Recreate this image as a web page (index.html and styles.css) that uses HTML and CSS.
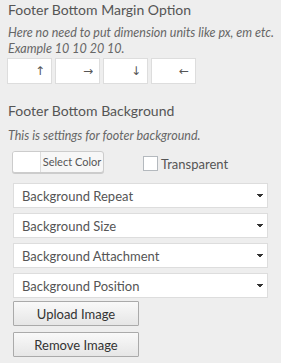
FILE: index.html
```html
<!DOCTYPE html>
<html lang="en">
<head>
    <meta charset="UTF-8">
    <title>Footer Bottom Options</title>
    <link rel="stylesheet" href="styles.css">
</head>
<body>
    <div class="options-panel">
        <div class="option-block">
            <h4 class="option-title">Footer Bottom Margin Option</h4>
            <p class="option-desc">Here no need to put dimension units like px, em etc. Example 10 10 20 10.</p>
            <div class="dimension-row">
                <input type="text" class="dimension-input" placeholder="&#8593;">
                <input type="text" class="dimension-input" placeholder="&#8594;">
                <input type="text" class="dimension-input" placeholder="&#8595;">
                <input type="text" class="dimension-input" placeholder="&#8592;">
            </div>
        </div>

        <div class="option-block">
            <h4 class="option-title">Footer Bottom Background</h4>
            <p class="option-desc">This is settings for footer background.</p>
            <div class="color-row">
                <button type="button" class="color-picker">
                    <span class="color-swatch"></span>
                    <span class="color-label">Select Color</span>
                </button>
                <label class="transparent-check">
                    <input type="checkbox">
                    <span>Transparent</span>
                </label>
            </div>

            <div class="select-list">
                <select class="bg-select"><option>Background Repeat</option></select>
                <select class="bg-select"><option>Background Size</option></select>
                <select class="bg-select"><option>Background Attachment</option></select>
                <select class="bg-select"><option>Background Position</option></select>
            </div>

            <div class="image-buttons">
                <button type="button" class="image-button">Upload Image</button>
                <button type="button" class="image-button">Remove Image</button>
            </div>
        </div>
    </div>
</body>
</html>
```

FILE: styles.css
```css
body {
    font-family: Lato, "Open Sans", Arial, sans-serif;
    background-color: #eeeeee;
    margin: 0;
    padding: 0;
    color: #555;
}
.options-panel {
    padding: 1px 0 0 0;
    width: 281px;
}
.option-block {
    padding: 0 0 0 7px;
}
.option-title {
    margin: 0 0 0 1px;
    font-size: 14px;
    font-weight: normal;
    line-height: 18px;
    color: #555;
}
.option-desc {
    margin: 6px 0 1px 1px;
    font-size: 12.5px;
    font-style: italic;
    line-height: 16px;
    color: #666;
}
.dimension-row {
    display: flex;
    gap: 3px;
}
.dimension-input {
    width: 45px;
    height: 26px;
    margin: 0;
    box-sizing: border-box;
    border: 1px solid #ddd;
    background-color: #fff;
    padding: 0 6px;
    text-align: right;
    font-size: 12px;
    font-family: "DejaVu Sans", sans-serif;
}
.dimension-input::placeholder {
    color: #555;
}
.option-block + .option-block {
    margin-top: 18px;
}
.option-block + .option-block .option-desc {
    margin-top: 8px;
}
.color-row {
    display: flex;
    align-items: center;
    height: 22px;
    margin: 7px 0 0 5px;
}
.color-picker {
    display: flex;
    width: 92px;
    height: 22px;
    margin: 0;
    padding: 0;
    border: 1px solid #ccc;
    border-radius: 3px;
    background-color: #f7f7f7;
    box-shadow: 0 1px 0 #ccc;
    overflow: hidden;
    font-family: inherit;
    cursor: pointer;
}
.color-swatch {
    width: 27px;
    height: 100%;
    background-color: #fff;
    border-right: 1px solid #ddd;
}
.color-label {
    flex: 1;
    font-size: 11px;
    line-height: 20px;
    color: #555;
}
.transparent-check {
    display: flex;
    align-items: center;
    margin-left: 39px;
    margin-top: 3px;
    font-size: 13px;
    color: #555;
}
.transparent-check input {
    width: 15px;
    height: 15px;
    margin: 0 3px 0 0;
    appearance: none;
    border: 1px solid #b4b9be;
    background-color: #fff;
}
.select-list {
    display: flex;
    flex-direction: column;
    gap: 5px;
    margin: 10px 0 0 6px;
}
.bg-select {
    width: 255px;
    height: 25px;
    margin: 0;
    border: 1px solid #ddd;
    background-color: #fff;
    appearance: none;
    padding: 0 8px;
    font-family: inherit;
    font-size: 13px;
    color: #555;
    background-image: linear-gradient(45deg, transparent 50%, #333 50%), linear-gradient(135deg, #333 50%, transparent 50%);
    background-size: 3px 4px, 3px 4px;
    background-position: 243px 10px, 246px 10px;
    background-repeat: no-repeat;
}
.image-buttons {
    display: flex;
    flex-direction: column;
    gap: 6px;
    margin: 3px 0 0 6px;
}
.image-button {
    width: 126px;
    height: 25px;
    margin: 0;
    border: 1px solid #aaa;
    border-radius: 1px;
    background: linear-gradient(#f9f9f9, #e6e6e6);
    font-family: inherit;
    font-size: 13px;
    color: #333;
    padding: 0;
}
```
